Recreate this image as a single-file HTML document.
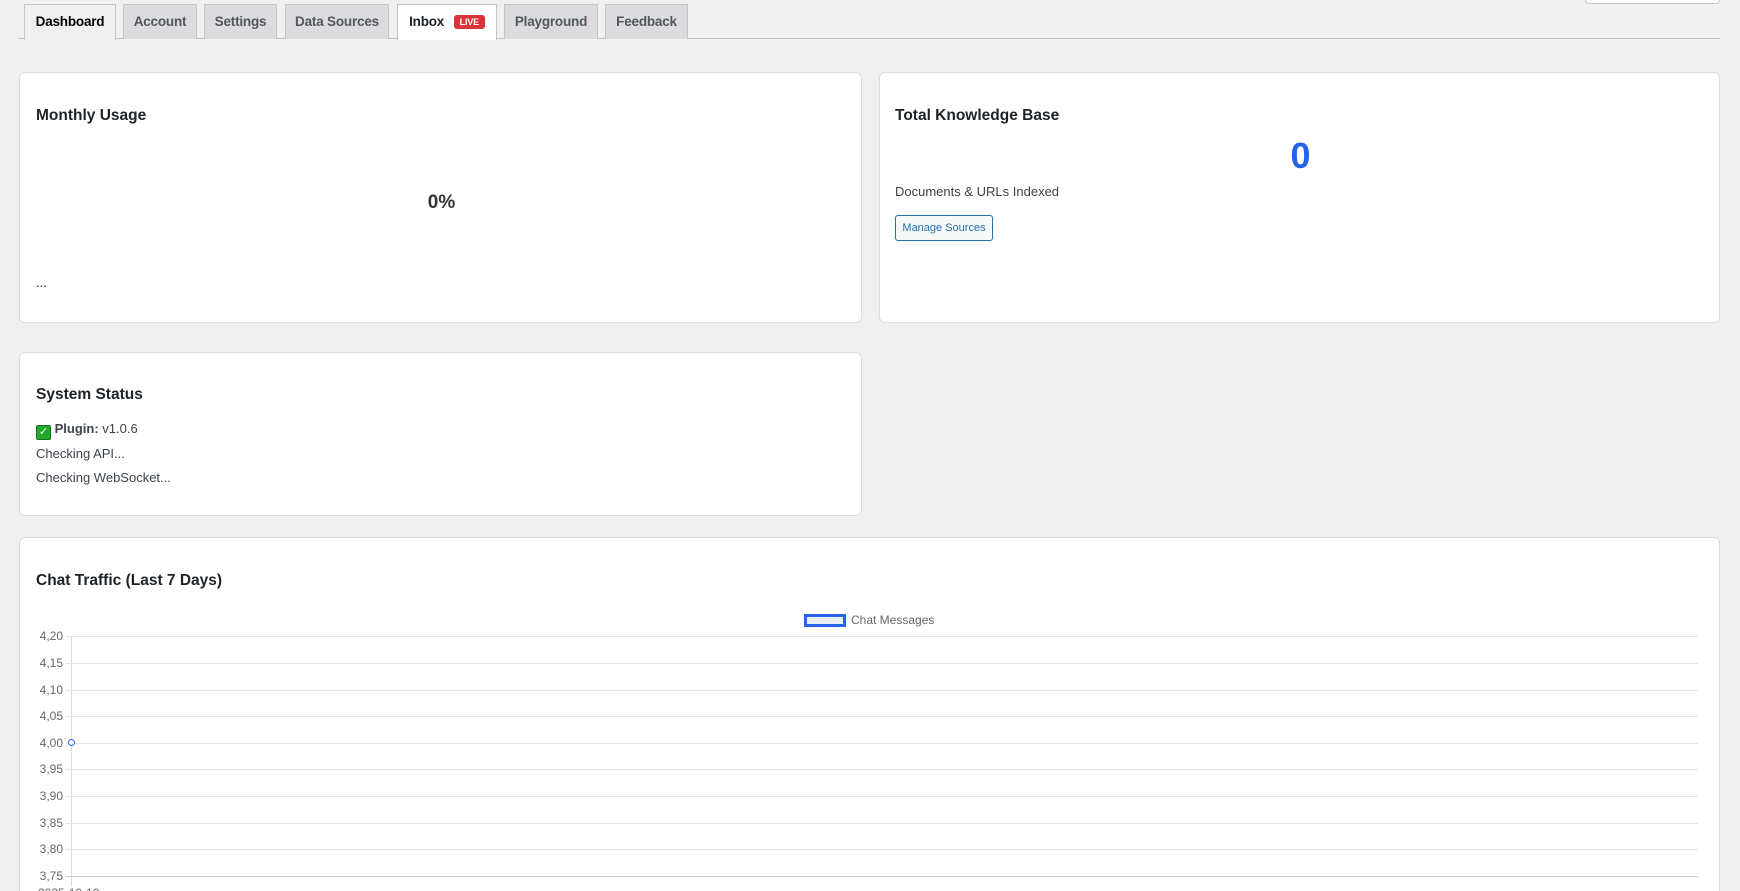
<!DOCTYPE html>
<html style="width:1740px;height:891px;overflow:hidden"><head><meta charset="utf-8"><style>
*{box-sizing:border-box;margin:0;padding:0}
body{width:1740px;height:891px;overflow:hidden;background:#f0f0f1;font-family:"Liberation Sans",sans-serif;color:#1d2327;position:relative}
.a{position:absolute}
.tab{position:absolute;top:4px;height:35px;background:#dcdcde;border:1px solid #c3c4c7;border-bottom:none;font-size:13.5px;font-weight:bold;color:#50575e;text-align:center;line-height:34px;letter-spacing:-0.2px}
.card{position:absolute;background:#fff;border:1px solid #dcdcde;border-radius:6px}
h2{position:absolute;font-size:15.5px;font-weight:bold;color:#1d2327}
.yl{position:absolute;left:20px;width:43px;text-align:right;font-size:12px;color:#666}
.gl{position:absolute;left:66px;width:1632px;height:1px;background:#e5e5e5}
</style></head><body>
<div class="a" style="left:18px;top:38px;width:1702px;height:1px;background:#c3c4c7"></div>
<div class="tab" style="left:24px;width:92px;background:#f0f0f1;color:#000;height:36px">Dashboard</div>
<div class="tab" style="left:123px;width:74px">Account</div>
<div class="tab" style="left:204px;width:73px">Settings</div>
<div class="tab" style="left:285px;width:104px">Data Sources</div>
<div class="tab" style="left:397px;width:100px;background:#fff;color:#1d2327;height:36px">Inbox <span style="display:inline-block;background:#d63638;color:#fff;font-size:9px;font-weight:bold;line-height:14px;padding:0 6px;border-radius:3px;vertical-align:1px;margin-left:6px">LIVE</span></div>
<div class="tab" style="left:504px;width:94px">Playground</div>
<div class="tab" style="left:605px;width:83px">Feedback</div>
<div class="a" style="left:1585px;top:-4px;width:135px;height:8px;background:#fff;border:1px solid #c3c4c7;border-radius:4px"></div>

<div class="card" style="left:19px;top:72px;width:843px;height:251px">
<h2 style="left:16px;top:34px">Monthly Usage</h2>
<div class="a" style="left:0;width:843px;top:119px;text-align:center;font-size:19px;font-weight:bold;color:#333">0%</div>
<div class="a" style="left:16px;top:202px;font-size:13px">...</div>
</div>
<div class="card" style="left:879px;top:72px;width:841px;height:251px">
<h2 style="left:15px;top:34px">Total Knowledge Base</h2>
<div class="a" style="left:0;width:841px;top:62px;text-align:center;font-size:36px;font-weight:bold;color:#2563eb">0</div>
<div class="a" style="left:15px;top:111px;font-size:13px;color:#3c434a">Documents &amp; URLs Indexed</div>
<div class="a" style="left:15px;top:142px;width:98px;height:26px;border:1px solid #2271b1;border-radius:3px;background:#f6f7f7;color:#2271b1;font-size:11px;text-align:center;line-height:24px">Manage Sources</div>
</div>
<div class="card" style="left:19px;top:352px;width:843px;height:164px">
<h2 style="left:16px;top:33px">System Status</h2>
<div class="a" style="left:16px;top:68px;font-size:13px;color:#3c434a"><span style="display:inline-block;width:15px;height:15px;background:#22a82a;border:1px solid #1a6e1f;border-radius:2px;color:#fff;font-size:11px;line-height:13px;text-align:center;vertical-align:-2px">✓</span> <b>Plugin:</b> v1.0.6</div>
<div class="a" style="left:16px;top:93px;font-size:13px;color:#3c434a">Checking API...</div>
<div class="a" style="left:16px;top:117px;font-size:13px;color:#3c434a">Checking WebSocket...</div>
</div>
<div class="card" style="left:19px;top:537px;width:1701px;height:360px;overflow:hidden">
<h2 style="left:16px;top:34px">Chat Traffic (Last 7 Days)</h2>
</div>
<div class="a" style="left:804px;top:614px;width:42px;height:13px;border:3px solid #2563eb;background:#e8eefc"></div>
<div class="a" style="left:851px;top:613px;font-size:12px;color:#666">Chat Messages</div>
<div class="a" style="left:71px;top:636px;width:1px;height:250px;background:#ddd"></div>
<div class="gl" style="top:636px"></div><div class="yl" style="top:629px">4,20</div>
<div class="gl" style="top:663px"></div><div class="yl" style="top:656px">4,15</div>
<div class="gl" style="top:690px"></div><div class="yl" style="top:683px">4,10</div>
<div class="gl" style="top:716px"></div><div class="yl" style="top:709px">4,05</div>
<div class="gl" style="top:743px"></div><div class="yl" style="top:736px">4,00</div>
<div class="gl" style="top:769px"></div><div class="yl" style="top:762px">3,95</div>
<div class="gl" style="top:796px"></div><div class="yl" style="top:789px">3,90</div>
<div class="gl" style="top:823px"></div><div class="yl" style="top:816px">3,85</div>
<div class="gl" style="top:849px"></div><div class="yl" style="top:842px">3,80</div>
<div class="gl" style="top:876px;background:#ccc"></div><div class="yl" style="top:869px">3,75</div>
<div class="a" style="left:68px;top:739px;width:7px;height:7px;border:1px solid #2563eb;border-radius:50%;background:#fff"></div>
<div class="a" style="left:38px;top:886px;font-size:12px;color:#666">2025-10-10</div>
</body></html>
